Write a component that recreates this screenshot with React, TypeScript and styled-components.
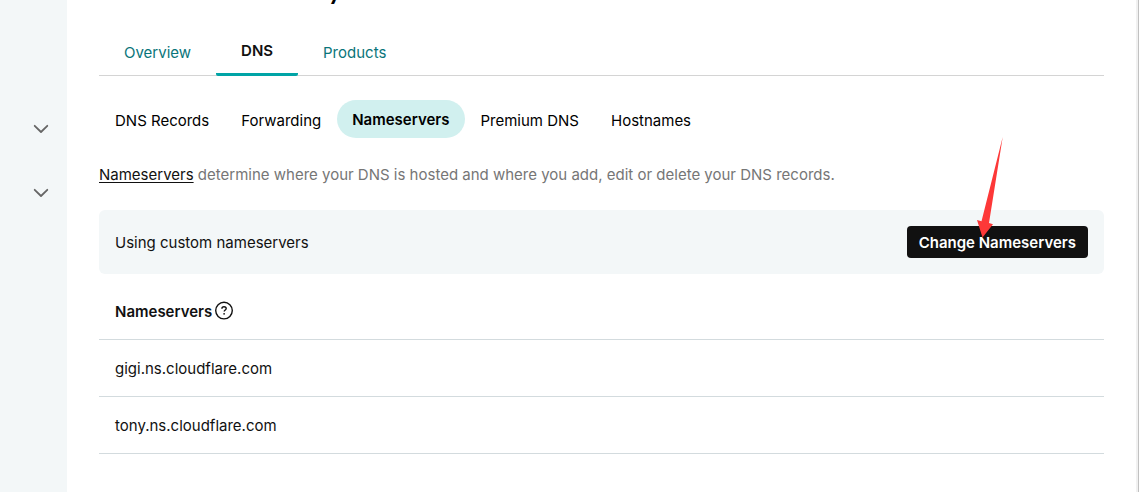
import React from "react";
import styled, { createGlobalStyle } from "styled-components";

const GlobalStyle = createGlobalStyle`
  * {
    box-sizing: border-box;
  }
  body {
    margin: 0;
    background: #fff;
    color: #111;
    font-family: Inter, "Liberation Sans", sans-serif;
    font-size: 15px;
    line-height: 24px;
  }
`;

const Page = styled.div`
  display: flex;
  min-height: 100vh;
  border-right: 1px solid #c1c1c1;
`;

const Sidebar = styled.aside`
  display: flex;
  flex-direction: column;
  align-items: flex-end;
  flex: 0 0 67px;
  gap: 40px;
  padding: 117px 14px 0 0;
  background: #f3f7f8;
`;

const ExpandButton = styled.button`
  display: flex;
  align-items: center;
  justify-content: center;
  width: 24px;
  height: 24px;
  padding: 0;
  border: 0;
  background: none;
  color: #666;
`;

const Main = styled.main`
  flex: 1;
  min-width: 0;
  padding: 0 32px;
  border-right: 2px solid #f1f1f1;
`;

const DomainTitle = styled.header`
  display: flex;
  align-items: flex-end;
  height: 6px;
  padding-left: 229px;
  overflow: hidden;
`;

const DomainName = styled.h1`
  margin: 0;
  color: #000;
  font-family: Lato, sans-serif;
  font-size: 26px;
  font-weight: 700;
  line-height: 32px;
`;

const TabBar = styled.nav`
  display: flex;
  height: 70px;
  margin-bottom: 24px;
  border-bottom: 1px solid #d4d4d4;
`;

const Tab = styled.a<{ $active?: boolean }>`
  height: 70px;
  padding: ${(p) => (p.$active ? "33px 25px 0" : "35px 25px 0")};
  border-bottom: ${(p) => (p.$active ? "3px solid #00a4a6" : "0")};
  border-radius: 2px;
  color: ${(p) => (p.$active ? "#111" : "#09757a")};
  font-weight: ${(p) => (p.$active ? 600 : 400)};
  text-decoration: none;
`;

const PillBar = styled.nav`
  display: flex;
`;

const Pill = styled.a<{ $active?: boolean }>`
  height: 38px;
  padding: ${(p) => (p.$active ? "8px 15px 0" : "9px 16px 0")};
  border-radius: 19px;
  background: ${(p) => (p.$active ? "#d1f0ef" : "transparent")};
  color: #000;
  font-weight: ${(p) => (p.$active ? 600 : 400)};
  text-decoration: none;
  white-space: nowrap;
`;

const Description = styled.p`
  margin: 25px 0 23px;
  color: #767676;
`;

const TermLink = styled.a`
  color: #111;
  text-decoration: underline;
  text-underline-offset: 2px;
`;

const StatusPanel = styled.section`
  display: flex;
  align-items: center;
  justify-content: space-between;
  min-height: 64px;
  padding: 16px;
  border-radius: 6px;
  background: #f3f7f8;
`;

const StatusText = styled.span`
  padding-top: 1px;
`;

const ChangeButton = styled.button`
  position: relative;
  height: 32px;
  padding: 2px 12px 0;
  border: 0;
  border-radius: 4px;
  background: #111;
  color: #fff;
  font: inherit;
  font-weight: 600;
  white-space: nowrap;
`;

const Pointer = styled.svg`
  position: absolute;
  top: -90px;
  left: 68px;
  pointer-events: none;
`;

const ServerTable = styled.table`
  width: 100%;
  margin-top: 9px;
  border-collapse: separate;
  border-spacing: 0;
`;

const HeaderCell = styled.th`
  padding: 17px 16px 15px;
  border-bottom: 1px solid #d3dbde;
  font-weight: 600;
  text-align: left;
`;

const HeaderLabel = styled.span`
  display: flex;
  align-items: flex-start;
  gap: 2px;
`;

const HelpButton = styled.button`
  display: flex;
  padding: 1px 0;
  border: 0;
  background: none;
  color: #111;
`;

const ServerCell = styled.td`
  padding: 17px 16px 15px;
  border-bottom: 1px solid #d3dbde;
`;

const Chevron = () => (
  <svg width="16" height="10" viewBox="0 0 16 10" fill="none" aria-hidden="true">
    <path d="M1.7 1.8 8 8 14.3 1.8" stroke="currentColor" strokeWidth="1.8" strokeLinecap="round" strokeLinejoin="round" />
  </svg>
);

const HelpIcon = () => (
  <svg width="20" height="20" viewBox="0 0 20 20" fill="none" aria-hidden="true">
    <circle cx="10" cy="9.6" r="8.3" stroke="currentColor" strokeWidth="1.4" />
    <path d="M7.9 7.7C7.9 6.4 8.8 5.7 10 5.7s2.2.8 2.2 1.8c0 1.4-2 1.5-2 3.1" stroke="currentColor" strokeWidth="1.4" />
    <circle cx="10.1" cy="12.8" r="0.9" fill="currentColor" />
  </svg>
);

const tabs = ["Overview", "DNS", "Products"];
const pills = ["DNS Records", "Forwarding", "Nameservers", "Premium DNS", "Hostnames"];
const servers = ["gigi.ns.cloudflare.com", "tony.ns.cloudflare.com"];

export default function App() {
  return (
    <>
      <GlobalStyle />
      <Page>
        <Sidebar>
          <ExpandButton type="button" aria-label="Expand first section">
            <Chevron />
          </ExpandButton>
          <ExpandButton type="button" aria-label="Expand second section">
            <Chevron />
          </ExpandButton>
        </Sidebar>
        <Main>
          <DomainTitle>
            <DomainName>y</DomainName>
          </DomainTitle>
          <TabBar aria-label="Domain">
            {tabs.map((tab) => (
              <Tab key={tab} href="#" $active={tab === "DNS"}>
                {tab}
              </Tab>
            ))}
          </TabBar>
          <PillBar aria-label="DNS">
            {pills.map((pill) => (
              <Pill key={pill} href="#" $active={pill === "Nameservers"}>
                {pill}
              </Pill>
            ))}
          </PillBar>
          <Description>
            <TermLink href="#">Nameservers</TermLink> determine where your DNS is hosted and where you add, edit or
            delete your DNS records.
          </Description>
          <StatusPanel>
            <StatusText>Using custom nameservers</StatusText>
            <ChangeButton type="button">
              Change Nameservers
              <Pointer width="30" height="104" viewBox="0 0 30 104" aria-hidden="true">
                <path d="M27.7 1 14 87 18 88.3 7.5 101.5 2 84 6.5 85.3Z" fill="#fd3838" />
              </Pointer>
            </ChangeButton>
          </StatusPanel>
          <ServerTable>
            <thead>
              <tr>
                <HeaderCell scope="col">
                  <HeaderLabel>
                    Nameservers
                    <HelpButton type="button" aria-label="About nameservers">
                      <HelpIcon />
                    </HelpButton>
                  </HeaderLabel>
                </HeaderCell>
              </tr>
            </thead>
            <tbody>
              {servers.map((server) => (
                <tr key={server}>
                  <ServerCell>{server}</ServerCell>
                </tr>
              ))}
            </tbody>
          </ServerTable>
        </Main>
      </Page>
    </>
  );
}
